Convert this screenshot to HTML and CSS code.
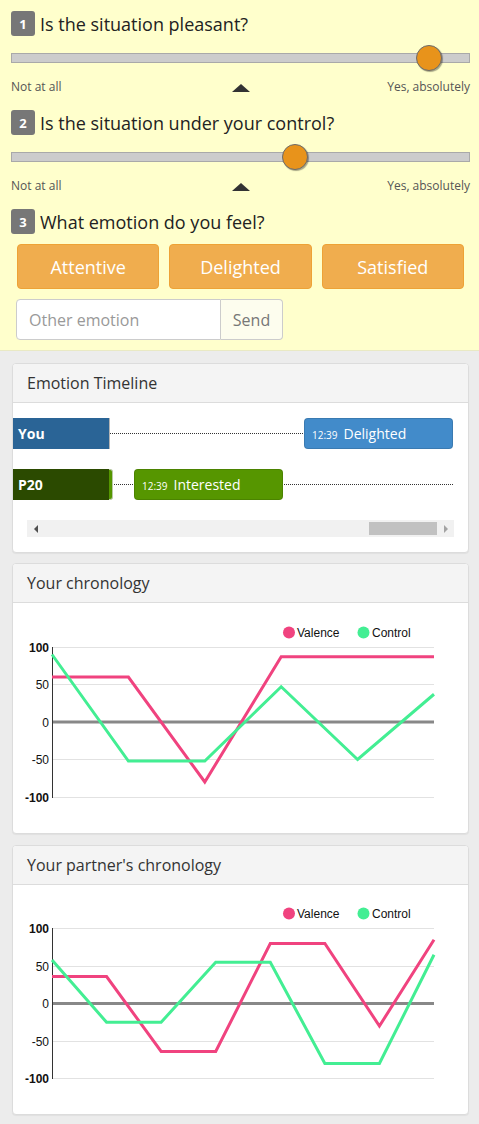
FILE: index.html
```html
<!DOCTYPE html>
<html>
<head>
<meta charset="utf-8">
<link rel="stylesheet" href="styles.css">
</head>
<body>
<div class="survey">
  <div class="question">
    <div class="q-title"><span class="badge">1</span><span>Is the situation pleasant?</span></div>
    <div class="slider"><div class="track"></div><div class="thumb" style="left:91%"></div></div>
    <div class="scale"><span>Not at all</span><span class="caret"></span><span class="right">Yes, absolutely</span></div>
  </div>
  <div class="question">
    <div class="q-title"><span class="badge">2</span><span>Is the situation under your control?</span></div>
    <div class="slider"><div class="track"></div><div class="thumb" style="left:61.8%"></div></div>
    <div class="scale"><span>Not at all</span><span class="caret"></span><span class="right">Yes, absolutely</span></div>
  </div>
  <div class="question last">
    <div class="q-title"><span class="badge">3</span><span>What emotion do you feel?</span></div>
    <div class="emotions">
      <button class="emo-btn">Attentive</button>
      <button class="emo-btn">Delighted</button>
      <button class="emo-btn">Satisfied</button>
    </div>
    <div class="input-group">
      <input class="other" type="text" placeholder="Other emotion">
      <button class="send">Send</button>
    </div>
  </div>
</div>

<div class="panels">
  <div class="panel">
    <div class="panel-heading">Emotion Timeline</div>
    <div class="timeline-body">
      <div class="tl-row">
        <div class="tl-line"></div>
        <div class="tl-label you">You</div>
        <div class="tl-item blue" style="left:291px"><span class="time">12:39</span>Delighted</div>
      </div>
      <div class="tl-row">
        <div class="tl-line"></div>
        <div class="tl-label partner">P20</div>
        <div class="tl-edge"></div>
        <div class="tl-item green" style="left:121px"><span class="time">12:39</span>Interested</div>
      </div>
      <div class="hscroll">
        <div class="arrow left"></div>
        <div class="hs-track"><div class="hs-thumb"></div></div>
        <div class="arrow right"></div>
      </div>
    </div>
  </div>

  <div class="panel">
    <div class="panel-heading">Your chronology</div>
    <div class="chart-body">
      <svg class="chart" width="455" height="230" viewBox="0 0 455 230">
        <g class="legend">
          <circle cx="276" cy="29.5" r="6" fill="#f0437f"/>
          <text x="284" y="34">Valence</text>
          <circle cx="350.5" cy="29.5" r="6" fill="#43ee93"/>
          <text x="359" y="34">Control</text>
        </g>
        <g stroke="#e2e2e2" stroke-width="1">
          <line x1="39" y1="44.5" x2="421" y2="44.5"/>
          <line x1="39" y1="81.5" x2="421" y2="81.5"/>
          <line x1="39" y1="156.5" x2="421" y2="156.5"/>
          <line x1="39" y1="194.5" x2="421" y2="194.5"/>
        </g>
        <line x1="39" y1="119" x2="421" y2="119" stroke="#888" stroke-width="3"/>
        <line x1="39.5" y1="44" x2="39.5" y2="195" stroke="#333" stroke-width="1"/>
        <g class="ylabels" text-anchor="end">
          <text x="36" y="48.5" class="b">100</text>
          <text x="36" y="86">50</text>
          <text x="36" y="123.5">0</text>
          <text x="36" y="161">-50</text>
          <text x="36" y="198.5" class="b">-100</text>
        </g>
        <polyline fill="none" stroke="#f0437f" stroke-width="3" points="39,74 115.4,74 191.8,179 268.2,53.75 344.6,53.75 421,53.75"/>
        <polyline fill="none" stroke="#43ee93" stroke-width="3" points="39,51.5 115.4,158 191.8,158 268.2,83.75 344.6,156.5 421,91.25"/>
      </svg>
    </div>
  </div>

  <div class="panel">
    <div class="panel-heading">Your partner's chronology</div>
    <div class="chart-body">
      <svg class="chart" width="455" height="229" viewBox="0 0 455 229">
        <g class="legend">
          <circle cx="276" cy="28.5" r="6" fill="#f0437f"/>
          <text x="284" y="33">Valence</text>
          <circle cx="350.5" cy="28.5" r="6" fill="#43ee93"/>
          <text x="359" y="33">Control</text>
        </g>
        <g stroke="#e2e2e2" stroke-width="1">
          <line x1="39" y1="43.5" x2="421" y2="43.5"/>
          <line x1="39" y1="81.5" x2="421" y2="81.5"/>
          <line x1="39" y1="156.5" x2="421" y2="156.5"/>
          <line x1="39" y1="193.5" x2="421" y2="193.5"/>
        </g>
        <line x1="39" y1="118.5" x2="421" y2="118.5" stroke="#888" stroke-width="3"/>
        <line x1="39.5" y1="43" x2="39.5" y2="194" stroke="#333" stroke-width="1"/>
        <g class="ylabels" text-anchor="end">
          <text x="36" y="47.5" class="b">100</text>
          <text x="36" y="86">50</text>
          <text x="36" y="123">0</text>
          <text x="36" y="161">-50</text>
          <text x="36" y="197.5" class="b">-100</text>
        </g>
        <polyline fill="none" stroke="#f0437f" stroke-width="3" points="39,91.5 93.57,91.5 148.14,166.5 202.71,166.5 257.29,58.5 311.86,58.5 366.43,141 421,54.75"/>
        <polyline fill="none" stroke="#43ee93" stroke-width="3" points="39,75 93.57,137.25 148.14,137.25 202.71,77.25 257.29,77.25 311.86,178.5 366.43,178.5 421,69.75"/>
      </svg>
    </div>
  </div>
</div>
</body>
</html>
```

FILE: styles.css
```css
* { box-sizing: border-box; }

html, body {
  margin: 0;
  padding: 0;
}

body {
  background: #ececec;
  font-family: "Open Sans", "DejaVu Sans", sans-serif;
  color: #333;
}

/* ---------- survey ---------- */
.survey {
  background: #ffffcc;
  padding: 11px 9px 10px 11px;
  border-bottom: 1px solid #e9e9c4;
}

.question {
  height: 99px;
}

.question.last {
  height: auto;
}

.q-title {
  display: flex;
  align-items: center;
  gap: 5px;
  height: 25px;
  font-size: 18px;
  color: #222;
  white-space: nowrap;
}

.badge {
  display: flex;
  align-items: center;
  justify-content: center;
  width: 24px;
  height: 25px;
  background: #777;
  color: #fff;
  border-radius: 3px;
  font-size: 13px;
  font-weight: bold;
}

.slider {
  position: relative;
  margin-top: 17px;
  height: 10px;
}

.track {
  height: 10px;
  background: #cccccc;
  border: 1px solid #a9a9a9;
}

.thumb {
  position: absolute;
  top: -8px;
  width: 26px;
  height: 26px;
  margin-left: -13px;
  border-radius: 50%;
  background: #e8931b;
  border: 1px solid #6b6b6b;
  box-shadow: 1px 1px 1px rgba(0, 0, 0, 0.35);
}

.scale {
  display: grid;
  grid-template-columns: 1fr auto 1fr;
  align-items: center;
  margin-top: 15px;
  height: 16px;
  font-size: 12px;
  color: #555;
}

.scale .right {
  justify-self: end;
}

.caret {
  width: 0;
  height: 0;
  border-left: 9px solid transparent;
  border-right: 9px solid transparent;
  border-bottom: 8px solid #333;
  margin-top: 2px;
}

.emotions {
  display: grid;
  grid-template-columns: repeat(3, 1fr);
  gap: 10px;
  margin: 10px 6px 0 6px;
}

.emo-btn {
  height: 45px;
  background: #f0ad4e;
  border: 1px solid #eea236;
  border-radius: 4px;
  color: #fff;
  font-family: "Open Sans", sans-serif;
  font-size: 18px;
  padding: 0;
}

.input-group {
  display: flex;
  margin: 10px 0 0 5px;
  width: 267px;
  height: 41px;
}

.other {
  width: 205px;
  height: 41px;
  border: 1px solid #ccc;
  border-radius: 4px 0 0 4px;
  padding: 0 12px;
  font-family: "Open Sans", sans-serif;
  font-size: 16px;
  color: #555;
  background: #fff;
  outline: none;
}

.other::placeholder {
  color: #999;
}

.send {
  width: 62px;
  height: 41px;
  border: 1px solid #ccc;
  border-left: none;
  border-radius: 0 4px 4px 0;
  background: #fdfdee;
  font-family: "Open Sans", sans-serif;
  font-size: 16px;
  color: #777;
  padding: 0;
}

/* ---------- panels ---------- */
.panels {
  padding: 12px 10px 10px 12px;
}

.panel {
  background: #fff;
  border: 1px solid #dcdcdc;
  border-radius: 4px;
  box-shadow: 0 1px 1px rgba(0, 0, 0, 0.05);
  margin-bottom: 10px;
  overflow: hidden;
}

.panel + .panel + .panel {
  margin-top: 11px;
}

.panel-heading {
  height: 39px;
  background: #f4f4f4;
  border-bottom: 1px solid #dcdcdc;
  padding: 0 14px;
  display: flex;
  align-items: center;
  font-size: 16px;
  color: #333;
}

/* ---------- timeline ---------- */
.timeline-body {
  padding: 15px 0 15px;
}

.tl-row {
  position: relative;
  height: 31px;
  margin-bottom: 20px;
}

.tl-line {
  position: absolute;
  left: 97px;
  right: 15px;
  top: 15px;
  border-top: 1px dotted #333;
}

.tl-label {
  position: relative;
  width: 97px;
  height: 31px;
  color: #fff;
  font-weight: bold;
  font-size: 14px;
  display: flex;
  align-items: center;
  padding-left: 5px;
}

.tl-label.you {
  background: #2a6496;
  border-right: 1px solid #b5b5b5;
}

.tl-label.partner {
  background: #2b4a00;
}

.tl-edge {
  position: absolute;
  left: 96px;
  top: 0;
  width: 4px;
  height: 31px;
  background: #559600;
  border: 1px solid #b9c9a6;
  border-left: none;
  border-radius: 0 3px 3px 0;
}

.tl-item {
  position: absolute;
  top: 0;
  width: 149px;
  height: 31px;
  border-radius: 4px;
  color: #fff;
  font-size: 14px;
  display: flex;
  align-items: center;
  padding-left: 7px;
  border: 1px solid rgba(0, 0, 0, 0.12);
}

.tl-item .time {
  font-size: 10px;
  margin-right: 6px;
  margin-top: 2px;
}

.tl-item.blue {
  background: #428bca;
}

.tl-item.green {
  background: #569600;
}

.hscroll {
  display: flex;
  height: 17px;
  margin: 0 14px;
  background: #f1f1f1;
}

.arrow {
  width: 17px;
  height: 17px;
  display: flex;
  align-items: center;
  justify-content: center;
}

.arrow.left::before {
  content: "";
  border-top: 4px solid transparent;
  border-bottom: 4px solid transparent;
  border-right: 4px solid #505050;
}

.arrow.right::before {
  content: "";
  border-top: 4px solid transparent;
  border-bottom: 4px solid transparent;
  border-left: 4px solid #a3a3a3;
}

.hs-track {
  flex: 1;
  display: flex;
  justify-content: flex-end;
  align-items: center;
}

.hs-thumb {
  width: 68px;
  height: 13px;
  background: #c1c1c1;
}

/* ---------- charts ---------- */
.chart-body {
  line-height: 0;
}

.chart {
  display: block;
}

.chart text {
  font-family: "Liberation Sans", Arial, sans-serif;
  font-size: 12px;
  fill: #111;
}

.chart .b {
  font-weight: bold;
}
```
